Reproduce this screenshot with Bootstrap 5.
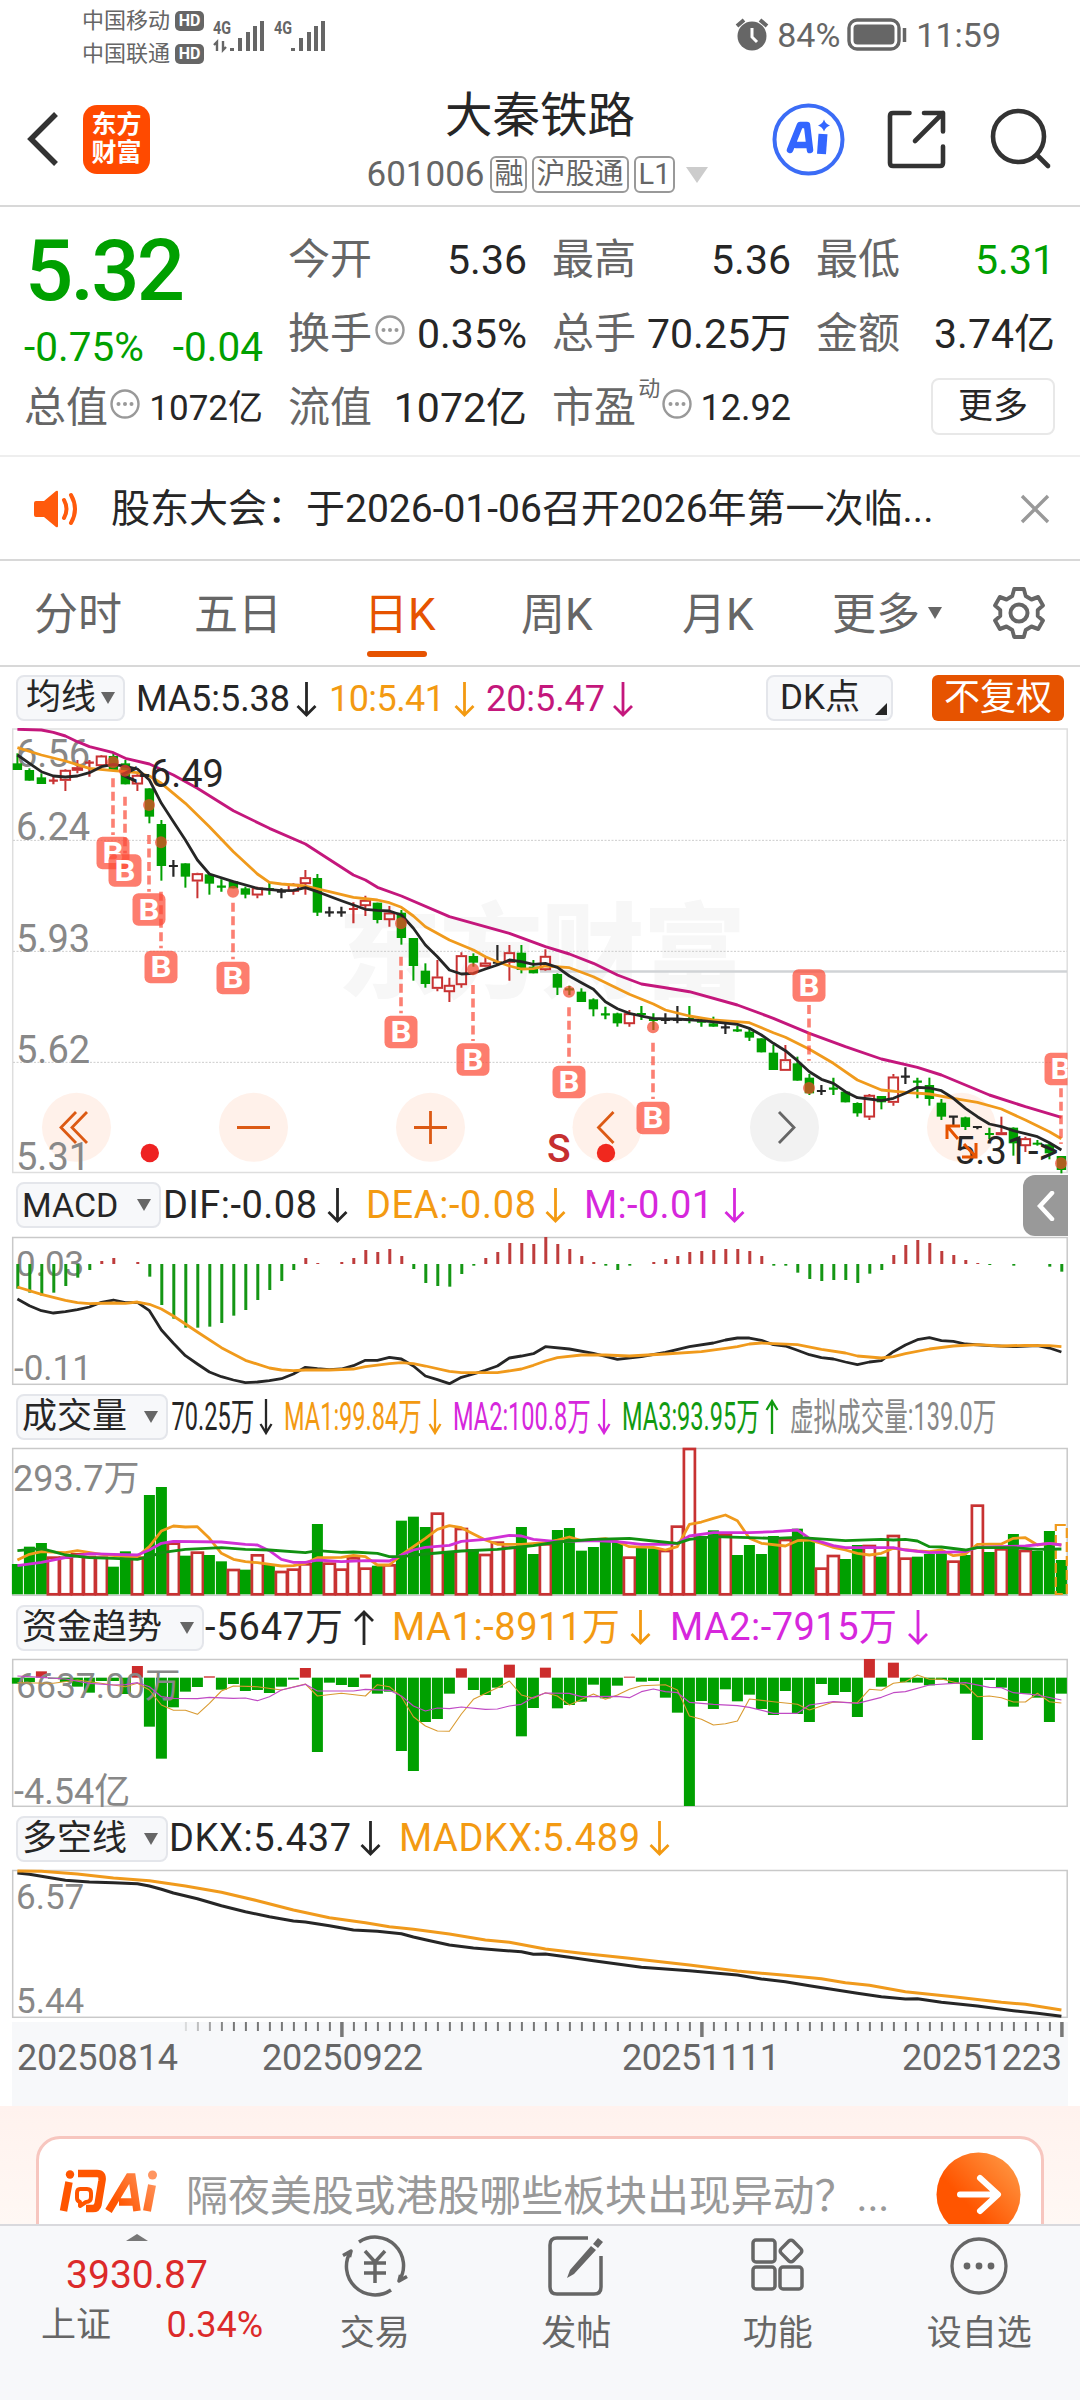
<!DOCTYPE html>
<html lang="zh-CN">
<head>
<meta charset="utf-8">
<meta name="viewport" content="width=1080">
<title>大秦铁路 601006</title>
<link href="https://cdn.jsdelivr.net/npm/bootstrap@5.3.0/dist/css/bootstrap.min.css" rel="stylesheet">
<script src="https://cdn.jsdelivr.net/npm/bootstrap@5.3.0/dist/js/bootstrap.bundle.min.js"></script>
<style>
:root{--ink:#262626;--muted-ink:#666;--down:#00a000;--up:#c83232;--brand:#e65300;--amber:#f39a12;--mag:#c4177c;--pur:#d627dc}
body{width:1080px;height:2400px;overflow:hidden;background:#fff;color:var(--ink);font-family:Roboto,"Noto Sans CJK SC",sans-serif;line-height:1}
svg{display:block;flex:none}
svg text{font-family:Roboto,"Noto Sans CJK SC",sans-serif}
.fs-22{font-size:22px}.fs-35{font-size:35px}.fs-36{font-size:36px}
.statusbar{height:70px;color:var(--muted-ink)}
.carrier{width:122px;margin-left:82px;margin-top:9px}
.hd{background:#666;color:#fff;font-size:16px;font-weight:700;width:29px;height:20px;border-radius:5px;text-align:center;line-height:20px}
.clockside{padding-right:79px;font-size:34px}
.topnav{height:137px;border-bottom:2px solid #d8d8d8;display:grid;grid-template-columns:351px 1fr 351px}
.applogo{width:67px;height:69px;border-radius:14px;background:#ff4a00;color:#fff;font-size:25px;font-weight:700;line-height:28px;text-align:center;padding-top:6px}
.stockname{font-size:47.5px;font-weight:400;line-height:48px}
.codetag{border:2px solid #999;border-radius:6px;height:37px;font-size:29px;line-height:32px;padding:0 3px;text-align:center}
.quote{height:250px;border-bottom:2px solid #eee;padding:16px 25px 0 24px;gap:25px}
.quote-col{width:239px}
.qrow{height:74px;font-size:41px}
.lbl{color:var(--muted-ink)}
.qrow .lbl-name{color:var(--muted-ink);font-size:42px}
.down{color:var(--down)}.up{color:#dc2a2a}
.lastprice{height:96px;font-size:85px;font-weight:500;letter-spacing:-2.8px;padding-left:1px}
.chg{height:52px;font-size:40.5px;padding-top:4px}
.morebtn{width:124px;height:57px;border:2px solid #e8e8e8;border-radius:8px;font-size:35px}
.news{height:104px;border-bottom:2px solid #d8d8d8;font-size:39px;padding-top:2px}
.ktabs{height:106px;border-bottom:2px solid #d8d8d8;font-size:44px;color:var(--muted-ink);padding-left:34px}
.ktabs .nav-item{height:104px;padding-top:4px}
.tab-on{color:var(--brand)}
.tab-on::after{content:"";position:absolute;left:3px;width:60px;height:6px;border-radius:3px;background:var(--brand);bottom:8px}
.legendrow{height:61px}
.pickbtn{height:46px;border:2px solid #e4e6eb;border-radius:8px;background:#f7f8fa;font-size:35px;padding:0 8px 0 4px}
.tri{width:0;height:0;border:7.5px solid transparent;border-top:12px solid #666;border-bottom:0}
.unadj{width:132px;height:46px;border-radius:6px;background:var(--brand);color:#fff;font-size:36px}
.sidetab{right:12px;top:1px;width:45px;height:61px;background:#999;border-radius:12px 0 0 12px}
.askzone{height:118px;background:linear-gradient(#fff2ee,#fff8f4);overflow:hidden;padding:30px 36px 0}
.askcard{height:140px;border:3px solid #f7c6bf;border-radius:24px;background:#fff;padding-top:13px}
.bottombar{height:176px;border-top:2px solid #d9d9dd;background:#f7f8fa;color:var(--muted-ink);font-size:35px}
.tabcell{width:201.5px;padding-top:9px}
</style>
</head>
<body>
<div class="d-flex flex-column">

<div class="statusbar d-flex">
  <div class="carrier fs-22">
    <div class="d-flex align-items-center justify-content-between mb-2" style="height:24px"><span>中国移动</span><span class="hd">HD</span></div>
    <div class="d-flex align-items-center justify-content-between" style="height:26px"><span>中国联通</span><span class="hd">HD</span></div>
  </div>
  <svg width="120" height="60" viewBox="208 0 120 60" fill="#666" style="margin-left:4px">
    <text x="213" y="34" font-size="19" font-weight="700" textLength="18" lengthAdjust="spacingAndGlyphs">4G</text>
    <text x="274" y="34" font-size="19" font-weight="700" textLength="18" lengthAdjust="spacingAndGlyphs">4G</text>
    <path d="M217 51V42l-3 3M223 41v9l3-3" stroke="#666" stroke-width="2.4" fill="none"/>
    <path d="M232 48v3M240 38v13M248 32v19M255 26v25M262 21v30M293 48v3M301 38v13M309 32v19M316 26v25M323 21v30" stroke="#666" stroke-width="4"/>
  </svg>
  <div class="clockside ms-auto d-flex align-items-center">
    <svg width="34" height="34" viewBox="0 0 34 34"><circle cx="17" cy="18" r="14.5" fill="#666"/><path d="M2 8L9 2M32 8L25 2" stroke="#666" stroke-width="4"/><path d="M17 10v9l5 5" stroke="#fff" stroke-width="3" fill="none"/></svg>
    <span class="ms-2">84%</span>
    <svg width="61" height="34" viewBox="0 0 61 34" style="margin-left:7px"><rect x="2" y="2" width="50" height="29" rx="8" fill="none" stroke="#666" stroke-width="3.4"/><rect x="6.500" y="6.500" width="41" height="20" rx="4" fill="#666"/><path d="M57.500 10v14" stroke="#666" stroke-width="3.500"/></svg>
    <span style="margin-left:8px">11:59</span>
  </div>
</div>

<nav class="topnav">
  <div class="d-flex align-items-center" style="padding:3px 0 0 26px">
    <svg width="34" height="56" viewBox="0 0 34 56"><path d="M30 3L5 28l25 25" fill="none" stroke="#333" stroke-width="5.500"/></svg>
    <div class="applogo" style="margin-left:23px">东方<br>财富</div>
  </div>
  <div class="d-flex flex-column align-items-center" style="padding-top:22px">
    <div class="stockname">大秦铁路</div>
    <div class="d-flex align-items-center lbl fs-35" style="margin-top:16px;gap:5px">
      <span style="margin-left:-6px">601006</span><span class="codetag" style="width:37px">融</span><span class="codetag">沪股通</span><span class="codetag" style="width:41px">L1</span>
      <svg width="22" height="16" style="margin-left:6px"><path d="M0 0h22L11 16z" fill="#ccc"/></svg>
    </div>
  </div>
  <div class="d-flex align-items-center justify-content-end" style="padding:3px 28px 0 0">
    <svg width="284" height="80" viewBox="768 99 284 80" fill="none" stroke="#333" stroke-width="4.600" stroke-linecap="round" stroke-linejoin="round">
      <circle cx="808.500" cy="139.500" r="34" stroke="#3b6cf6" stroke-width="4"/>
      <path d="M790 150L800 125h7l3 25M796 145h12" stroke="#3366ff" stroke-width="6.500"/><path d="M823 134L821.500 154" stroke="#3366ff" stroke-width="9" stroke-linecap="butt"/>
      <path d="M824 119.500q1.500 4.500 6 6-4.500 1.500-6 6-1.500-4.500-6-6 4.500-1.500 6-6z" fill="#3366ff" stroke="none"/>
      <path d="M909.500 113H893q-3 0-3 3v47q0 3 3 3h47q3 0 3-3v-16.500M924 113h19v18.500M943 113l-28 28"/>
      <circle cx="1018.500" cy="136.500" r="25.500"/><path d="M1037 155l11 11"/>
    </svg>
  </div>
</nav>

<section class="quote d-flex">
  <div class="quote-col d-flex flex-column down">
    <div class="lastprice d-flex align-items-center"><span>5.32</span></div>
    <div class="chg d-flex align-items-center justify-content-between"><span>-0.75%</span><span>-0.04</span></div>
    <div class="qrow d-flex align-items-center justify-content-between" style="color:var(--ink)"><span class="lbl-name">总值</span><svg width="30" height="30" style="margin:-8px 7px 0 0"><use href="#more-dots"/></svg><span class="fs-35">1072亿</span></div>
  </div>
  <div class="quote-col">
    <div class="qrow d-flex align-items-center justify-content-between"><span class="lbl-name">今开</span><span>5.36</span></div>
    <div class="qrow d-flex align-items-center justify-content-between"><span class="lbl-name">换手</span><svg width="30" height="30" style="margin:-8px 10px 0 0"><use href="#more-dots"/></svg><span>0.35%</span></div>
    <div class="qrow d-flex align-items-center justify-content-between"><span class="lbl-name">流值</span><span>1072亿</span></div>
  </div>
  <div class="quote-col">
    <div class="qrow d-flex align-items-center justify-content-between"><span class="lbl-name">最高</span><span>5.36</span></div>
    <div class="qrow d-flex align-items-center justify-content-between"><span class="lbl-name">总手</span><span>70.25万</span></div>
    <div class="qrow d-flex align-items-center justify-content-between"><span class="lbl-name">市盈</span><span class="lbl fs-22" style="margin-top:-38px">动</span><svg width="30" height="30" style="margin:-8px 6px 0 0"><use href="#more-dots"/></svg><span class="fs-36">12.92</span></div>
  </div>
  <div class="quote-col">
    <div class="qrow d-flex align-items-center justify-content-between"><span class="lbl-name">最低</span><span class="down">5.31</span></div>
    <div class="qrow d-flex align-items-center justify-content-between"><span class="lbl-name">金额</span><span>3.74亿</span></div>
    <div class="qrow d-flex align-items-center justify-content-end"><span class="morebtn d-flex align-items-center justify-content-center" style="margin-top:-3px">更多</span></div>
  </div>
</section>

<section class="news d-flex align-items-center">
  <svg width="46" height="38" viewBox="34 489 46 38" style="margin-left:34px"><path d="M36 500h8l12-10q2-1 2 1v34q0 2-2 1l-12-10h-8q-2 0-2-2v-12q0-2 2-2z" fill="#ff5a0c"/><path d="M64 499q5 9 0 18M71 494q8 14 0 28" fill="none" stroke="#ff5a0c" stroke-width="4" stroke-linecap="round"/></svg>
  <span style="margin-left:31px">股东大会：于2026-01-06召开2026年第一次临...</span>
  <svg class="ms-auto" width="30" height="30" viewBox="0 0 30 30" style="margin-right:30px"><path d="M2 2l26 26M28 2L2 28" stroke="#999" stroke-width="3.400"/></svg>
</section>

<ul class="ktabs nav flex-nowrap">
  <li class="nav-item d-flex align-items-center" style="width:160px">分时</li>
  <li class="nav-item d-flex align-items-center" style="width:170px">五日</li>
  <li class="nav-item d-flex align-items-center position-relative tab-on" style="width:157px">日K</li>
  <li class="nav-item d-flex align-items-center" style="width:161px">周K</li>
  <li class="nav-item d-flex align-items-center" style="width:150px">月K</li>
  <li class="nav-item d-flex align-items-center" style="width:161px">更多<span class="tri" style="margin:-4px 0 0 8px"></span></li>
  <li class="nav-item d-flex align-items-center" style="padding-top:0"><svg width="52" height="54" viewBox="-26 -27 52 54" fill="none" stroke="#666" stroke-width="4" stroke-linejoin="round"><path d="M-5-24H5L7-17 13-13.500 20-16 25-7.500 19.500-3V3L25 7.500 20 16 13 13.500 7 17 5 24H-5L-7 17-13 13.500-20 16-25 7.500-19.500 3V-3L-25-7.500-20-16-13-13.500-7-17Z" transform="scale(.96 1)"/><circle r="8.500"/></svg></li>
</ul>

<div class="legendrow d-flex align-items-center" style="padding-left:16px">
  <span class="pickbtn d-flex align-items-center justify-content-between" style="width:109px;padding-left:8px">均线<span class="tri"></span></span>
  <svg width="641" height="61" viewBox="125 666 641 61" font-size="36">
    <text x="136" y="710" fill="#262626" textLength="154">MA5:5.38</text><use href="#dn" x="306.500" y="681" color="#262626"/>
    <text x="329" y="710" fill="#f39a12" textLength="116">10:5.41</text><use href="#dn" x="464.500" y="681" color="#f39a12"/>
    <text x="486" y="710" fill="#c4177c" textLength="119">20:5.47</text><use href="#dn" x="623" y="681" color="#c4177c"/>
  </svg>
  <span class="pickbtn d-flex align-items-center justify-content-between" style="width:127px;padding-left:12px;padding-right:4px">DK点<svg width="12" height="12" style="margin-top:22px"><path d="M12 0v12H0z" fill="#262626"/></svg></span>
  <span class="unadj d-flex align-items-center justify-content-center" style="margin-left:39px">不复权</span>
</div>

<svg id="k-chart" width="1080" height="446" viewBox="0 728 1080 446"></svg>

<div class="legendrow position-relative d-flex align-items-center" style="padding-left:16px;height:62px">
  <span class="pickbtn d-flex align-items-center justify-content-between" style="width:145px;font-size:34px">MACD<span class="tri"></span></span>
  <svg width="600" height="61" viewBox="161 1175 600 61" font-size="38">
    <text x="163" y="1218" fill="#262626" textLength="154">DIF:-0.08</text><use href="#dn" x="337.500" y="1188" color="#262626"/>
    <text x="366" y="1218" fill="#f39a12" textLength="170">DEA:-0.08</text><use href="#dn" x="555.500" y="1188" color="#f39a12"/>
    <text x="584" y="1218" fill="#d627dc" textLength="129">M:-0.01</text><use href="#dn" x="734.500" y="1188" color="#d627dc"/>
  </svg>
  <div class="sidetab position-absolute d-flex align-items-center justify-content-center"><svg width="18" height="30" viewBox="0 0 18 30"><path d="M15 2L3 15l12 13" fill="none" stroke="#fff" stroke-width="4.500" stroke-linecap="round"/></svg></div>
</div>
<svg id="macd-chart" width="1080" height="150" viewBox="0 1236 1080 150"></svg>

<div class="legendrow d-flex align-items-center" style="padding-left:16px">
  <span class="pickbtn d-flex align-items-center justify-content-between" style="width:152px">成交量<span class="tri"></span></span>
  <svg width="850" height="61" viewBox="168 1386 850 61" font-size="38">
    <text transform="translate(171.500 1430) scale(.62 1)" fill="#262626">70.25万</text><use href="#dn-slim" x="266" y="1399" color="#262626"/>
    <text transform="translate(284 1430) scale(.62 1)" fill="#f39a12">MA1:99.84万</text><use href="#dn-slim" x="435" y="1399" color="#f39a12"/>
    <text transform="translate(453 1430) scale(.62 1)" fill="#d627dc">MA2:100.8万</text><use href="#dn-slim" x="604" y="1399" color="#d627dc"/>
    <text transform="translate(622 1430) scale(.62 1)" fill="#119a11">MA3:93.95万</text><use href="#up-slim" x="772" y="1399" color="#119a11"/>
    <text transform="translate(790 1430) scale(.62 1)" fill="#888">虚拟成交量:139.0万</text>
  </svg>
</div>
<svg id="vol-chart" width="1080" height="150" viewBox="0 1447 1080 150"></svg>

<div class="legendrow d-flex align-items-center" style="padding-left:16px">
  <span class="pickbtn d-flex align-items-center justify-content-between" style="width:188px">资金趋势<span class="tri"></span></span>
  <svg width="800" height="61" viewBox="204 1597 800 61" font-size="38">
    <text x="205" y="1640" fill="#262626" textLength="138">-5647万</text><use href="#upa" x="364" y="1610" color="#262626"/>
    <text x="392" y="1640" fill="#f39a12" textLength="228">MA1:-8911万</text><use href="#dn" x="640.500" y="1610" color="#f39a12"/>
    <text x="670" y="1640" fill="#d627dc" textLength="227">MA2:-7915万</text><use href="#dn" x="918" y="1610" color="#d627dc"/>
  </svg>
</div>
<svg id="fund-chart" width="1080" height="150" viewBox="0 1658 1080 150"></svg>

<div class="legendrow d-flex align-items-center" style="padding-left:16px">
  <span class="pickbtn d-flex align-items-center justify-content-between" style="width:152px">多空线<span class="tri"></span></span>
  <svg width="600" height="61" viewBox="168 1808 600 61" font-size="38">
    <text x="169" y="1851" fill="#262626" textLength="182">DKX:5.437</text><use href="#dn" x="370.500" y="1821" color="#262626"/>
    <text x="399" y="1851" fill="#f39a12" textLength="241">MADKX:5.489</text><use href="#dn" x="659.500" y="1821" color="#f39a12"/>
  </svg>
</div>
<svg id="dkx-chart" width="1080" height="150" viewBox="0 1869 1080 150"></svg>
<svg id="axis" width="1080" height="87" viewBox="0 2019 1080 87"></svg>

<section class="askzone">
  <div class="askcard d-flex align-items-start">
    <svg width="110" height="60" viewBox="56 2162 110 60" style="margin:8px 0 0 17px">
      <defs><linearGradient id="logo-g" gradientUnits="userSpaceOnUse" x1="120" y1="2210" x2="160" y2="2180"><stop stop-color="#ff5500"/><stop offset="1" stop-color="#ff9a66"/></linearGradient></defs>
      <g fill="none" stroke="#ff5500" stroke-width="7.500" stroke-linejoin="round"><path d="M69 2184l-5.500 29"/><path d="M78 2175.500h19q6 0 5 7l-4 24q-1 4-5 4h-7"/><path d="M80 2191h7q4 0 4 4v4q0 5-5 5l-6 4v-4q-3-1-3-4v-5q0-4 3-4z" stroke-width="4"/></g><circle cx="70" cy="2176.500" r="4.200" fill="#ff5500"/>
      <path d="M108.500 2213L129 2179h3l5 34M119 2204h15" fill="none" stroke="url(#logo-g)" stroke-width="7.500"/>
      <path d="M152 2187l-5 26" stroke="url(#logo-g)" stroke-width="8"/><circle cx="152.500" cy="2177" r="4.500" fill="#ff9560"/>
    </svg>
    <span style="font-size:42px;letter-spacing:-.1px;color:#999;margin:24px 0 0 20px">隔夜美股或港股哪些板块出现异动？...</span>
    <svg class="ms-auto" width="85" height="85" viewBox="0 0 85 85" style="margin-right:20px"><defs><linearGradient id="go-g" x1=".35" y1=".6" x2=".9" y2=".1"><stop stop-color="#ff5500"/><stop offset="1" stop-color="#ff9440"/></linearGradient></defs><circle cx="42.500" cy="42.500" r="42" fill="url(#go-g)"/><path d="M24 42.500h37M44 26l18 16.500L44 59" fill="none" stroke="#fff" stroke-width="6" stroke-linecap="round" stroke-linejoin="round"/></svg>
  </div>
</section>

<footer class="bottombar d-flex">
  <div style="width:274px" class="d-flex flex-column align-items-center">
    <svg width="22" height="7" style="margin-top:8px"><path d="M0 7h22L11 0z" fill="#777"/></svg>
    <span class="up" style="font-size:39px;margin-top:15px">3930.87</span>
    <div class="d-flex justify-content-between align-items-center" style="width:222px;margin:12px 0 0 30px"><span>上证</span><span class="up fs-36">0.34%</span></div>
  </div>
  <div class="tabcell d-flex flex-column align-items-center">
    <svg width="68" height="62" viewBox="-34 -31 68 62" fill="none" stroke="#666" stroke-width="3.500" stroke-linejoin="round"><path d="M-16-24A28.500 28.500 0 0 1 24 15L32 10.500M25.500 9L24 15"/><path d="M16 24A28.500 28.500 0 0 1-24-15L-32-10.500M-25.500-9L-24-15"/><path d="M-10-15L0-4 10-15M0-4V17M-11-3H11M-11 7H11"/></svg>
    <span style="margin-top:19px">交易</span>
  </div>
  <div class="tabcell d-flex flex-column align-items-center">
    <svg width="60" height="62" viewBox="-30 -31 60 62" fill="none" stroke="#666" stroke-width="3.500"><path d="M12-28H-19Q-26-28-26-21V21Q-26 28-19 28H18Q25 28 25 21V-10"/><path d="M-9 12L-6 4 15-20l5 4L-2 8zM17-22l5-6 5 4-5 6z" fill="#666" stroke="none"/></svg>
    <span style="margin-top:19px">发帖</span>
  </div>
  <div class="tabcell d-flex flex-column align-items-center">
    <svg width="60" height="62" viewBox="-30 -31 60 62" fill="none" stroke="#666" stroke-width="3.500"><rect x="-25" y="-26" width="22" height="22" rx="3"/><rect x="-25" y="1" width="22" height="22" rx="3"/><rect x="2" y="1" width="22" height="22" rx="3"/><rect x="-8.500" y="-8.500" width="17" height="17" rx="3" transform="translate(13 -15) rotate(45)"/></svg>
    <span style="margin-top:19px">功能</span>
  </div>
  <div class="tabcell d-flex flex-column align-items-center">
    <svg width="60" height="62" viewBox="-30 -31 60 62" fill="none" stroke="#666" stroke-width="3.300"><circle r="27"/><g fill="#666" stroke="none"><circle cx="-12" r="3.400"/><circle r="3.400"/><circle cx="12" r="3.400"/></g></svg>
    <span style="margin-top:19px">设自选</span>
  </div>
</footer>
</div>

<svg width="0" height="0" class="position-absolute">
  <g id="more-dots"><circle cx="15" cy="15" r="13.500" fill="none" stroke="#999" stroke-width="2.400"/><g fill="#999"><circle cx="8.500" cy="15" r="2"/><circle cx="15" cy="15" r="2"/><circle cx="21.500" cy="15" r="2"/></g></g>
  <path id="dn" d="M0 0V33M-9 24L0 33 9 24" fill="none" stroke="currentColor" stroke-width="2.800"/>
  <path id="upa" d="M0 35V2M-9 11L0 2 9 11" fill="none" stroke="currentColor" stroke-width="2.800"/>
  <path id="dn-slim" d="M0 0V34M-5.500 25L0 34 5.500 25" fill="none" stroke="currentColor" stroke-width="2.300"/>
  <path id="up-slim" d="M0 35V2M-5.500 11L0 2 5.500 11" fill="none" stroke="currentColor" stroke-width="2.300"/>
</svg>

<script>
// One trading day is 12px wide; vertical values are in thirds of a pixel below each chart's origin.
const GREEN='#00a000', RED='#c83232', INK='#262626', AMBER='#f09a1c', MAG='#c4177c', PUR='#d030d6';
const X=i=>17.4+i*12;
const frame=(t,b,c)=>`<rect x="12.700" y="${t}" width="1054.500" height="${b-t}" fill="none" stroke="${c}" stroke-width="1.500"/>`;
const line=(s,base,c,w)=>`<polyline fill="none" stroke="${c}" stroke-width="${w}" stroke-linejoin="round" points="${s.trim().split(/\s+/).map(p=>{const[i,v]=p.split(':');return X(+i)+','+(base+v/3).toFixed(1)}).join(' ')}"/>`;
const label=(x,y,t,s,c='#888',e='')=>`<text x="${x}" y="${y}" font-size="${s}" fill="${c}" ${e}>${t}</text>`;

// Daily candles: colour high,body top,body bottom,low
(function(){
const B=720,Y=v=>B+v/3;
const K=`g100,130,150,150 g145,150,182,182 g160,172,192,192 r170,182,184,193 r148,150,182,213 r120,142,152,160 r120,128,130,170 r105,107,138,140 g98,108,150,150 g120,130,193,193 r163,165,193,213 g205,205,290,310 g300,312,438,482 k420,438,440,470 g430,430,470,503 r458,460,484,535 g460,463,491,524 g478,500,502,515 g483,484,505,505 g500,505,524,535 r500,503,526,535 g485,507,509,524 k505,515,517,535 r490,492,515,524 r450,472,492,524 g462,474,578,588 k560,577,579,590 k560,577,579,590 r547,567,569,610 r527,540,558,588 g548,548,600,610 r558,578,600,620 g570,578,654,674 g654,654,738,782 g730,752,792,803 r720,770,806,814 r773,795,816,846 r697,706,795,803 g700,708,728,740 r710,728,740,742 k675,728,730,735 r675,697,728,782 g675,698,750,760 g720,740,760,760 r688,708,750,752 g760,762,803,825 g797,808,810,825 g805,815,846,846 g835,838,868,889 g860,883,885,898 g878,880,910,920 r870,880,912,920 g858,882,884,900 g880,900,902,930 k880,900,902,912 k858,900,902,910 g858,897,899,910 g895,905,908,920 g890,910,920,920 k910,922,924,942 g918,931,934,936 g925,935,953,963 g955,955,997,997 g975,998,1050,1050 r975,1018,1052,1052 g1010,1030,1082,1082 g1062,1073,1120,1125 k1095,1113,1115,1125 g1073,1106,1109,1125 g1115,1115,1147,1147 g1147,1149,1180,1190 r1122,1125,1192,1200 g1128,1128,1147,1168 r1062,1070,1148,1157 k1042,1070,1072,1092 g1073,1085,1088,1135 g1073,1095,1137,1157 g1137,1148,1190,1200 k1190,1190,1193,1220 g1190,1192,1221,1230 k1220,1221,1223,1228 g1223,1242,1245,1257 r1190,1237,1245,1245 g1222,1223,1270,1307 r1250,1255,1278,1296 g1260,1268,1274,1277 g1270,1273,1300,1318 g1308,1308,1350,1360`;
let h='';
h+=label(338,990,'东方财富',103,'#f7f7f7','font-weight="900" textLength="408"');
h+=frame(729,1172.5,'#dedede');
[361,694,1027].forEach(v=>h+=`<path d="M13 ${Y(v)}H1067" stroke="#ccc" stroke-width="1" stroke-dasharray="2 1.500"/>`);
h+=`<path d="M540 971.500H1067" stroke="#d0d3d6" stroke-width="2.500"/>`;
[[76.500,0],[253.500,0],[430.500,0],[607,0],[784.500,1],[961.500,0]].forEach(b=>h+=`<circle cx="${b[0]}" cy="1127.300" r="34.500" fill="${b[1]?'#f2f2f2':'#fff1ea'}"/>`);
h+=`<g fill="none" stroke="#dc5a14" stroke-width="2.800"><path d="M76 1112l-15 15.500 15 15.500M87 1112l-15 15.500 15 15.500M237 1127.500h33M414 1127.500h33M430.500 1111v33M613.500 1112l-15 15.500 15 15.500"/><path d="M779 1112l15 15.500-15 15.500" stroke="#666"/></g>`;
[[767,'6.56'],[840,'6.24'],[951.500,'5.93'],[1062.500,'5.62'],[1169.500,'5.31']].forEach(l=>h+=label(16,l[0],l[1],38));
K.split(' ').forEach((s,i)=>{const c={g:GREEN,r:RED,k:INK}[s[0]],[a,t,b,z]=s.slice(1).split(',').map(v=>Y(+v)),x=X(i);
 if(b-t<1.2){h+=`<path d="M${x} ${a}V${z}M${x-4.500} ${t}h9" stroke="${c}" stroke-width="2.200"/>`;}
 else if(s[0]=='r'){h+=`<path d="M${x} ${a}V${t}M${x} ${b}V${z}" stroke="${c}" stroke-width="2"/><rect x="${x-4.700}" y="${t+.8}" width="9.400" height="${Math.max(b-t-1.6,1)}" fill="none" stroke="${c}" stroke-width="2"/>`;}
 else h+=`<path d="M${x} ${a}V${z}" stroke="${c}" stroke-width="2"/><rect x="${x-4.700}" y="${t}" width="9.400" height="${b-t}" fill="${c}"/>`;});
h+=line('0:28 2:30 3:37 4:48 5:65 6:80 8:98 9:115 11:132 13:165 15:205 18:272 21:325 24:372 28:465 29:480 30:502 32:528 36:590 41:640 44:680 46:702 48:730 50:765 52:792 54:803 56:815 60:855 63:895 66:940 69:980 72:1017 75:1042 77:1065 81:1125 84:1160 87:1192',B,MAG,2.9);
h+=line('0:83 2:105 4:123 6:145 8:152 10:158 11:168 12:190 14:250 16:320 18:395 20:462 21:487 22:492 24:498 26:515 28:532 30:540 31:548 32:562 33:588 34:620 36:660 38:690 39:710 40:725 41:738 42:747 43:746 44:738 46:743 48:770 51:823 53:852 54:870 56:888 58:900 61:908 63:938 64:952 66:988 68:1030 70:1080 72:1110 74:1117 76:1122 78:1135 80:1147 82:1167 84:1200 86:1235 87:1256',B,AMBER,2.8);
h+=line('0:105 1:130 2:155 3:168 4:171 5:168 6:158 7:140 8:133 9:139 10:147 11:180 12:250 13:305 14:360 15:420 16:462 18:485 20:505 22:512 23:511 24:503 25:515 27:542 29:568 30:571 31:573 32:585 33:625 34:675 35:710 36:750 37:762 38:760 39:747 40:735 41:720 42:725 43:733 44:730 45:742 46:768 47:788 48:808 49:845 50:866 51:880 52:888 53:895 54:897 55:897 57:902 60:913 61:925 62:945 63:970 64:992 65:1022 66:1055 67:1078 68:1090 69:1115 70:1133 71:1137 72:1142 73:1135 74:1120 75:1102 76:1104 77:1112 78:1135 79:1165 80:1190 81:1212 82:1220 83:1232 84:1241 85:1250 86:1268 87:1290',B,INK,2.8);
h+=label(120,786.5,'&lt;-6.49',38,INK)+label(954,1164,'5.31-&gt;',38,INK);
h+=`<path d="M947 1139v-13h13M947 1126l11 13M976 1143v14h-14M976 1157l-12-13" fill="none" stroke="#e65300" stroke-width="3"/>`;
// Buy marks: day, dot, dash start, dash end, badge top
[[8,127,175,345,350],[9,152,230,400,403],[11,255,345,515,520],[12,367,515,685,692],[18,515,548,718,725],[32,610,710,880,887],[38,748,795,963,970],[46,815,862,1030,1037],[53,922,968,1137,1145],[66,1104,855,1022,748],[87,1330,1105,1272,998]].forEach(m=>{const x=X(m[0])-.4;
h+=`<circle cx="${x}" cy="${Y(m[1])}" r="6" fill="#f4452b" fill-opacity=".7"/><path d="M${x} ${Y(m[2])}V${Y(m[3])}" stroke="#fb4a38" stroke-opacity=".7" stroke-width="3.600" stroke-dasharray="9 4.500"/><g ${m[0]==87?'clip-path="url(#edge)"':''}><rect x="${x-16.500}" y="${Y(m[4])}" width="33" height="32.500" rx="6" fill="#fc4b36" fill-opacity=".72"/><text x="${x}" y="${Y(m[4])+26.500}" font-size="30" font-weight="700" fill="#fff" text-anchor="middle" textLength="21" lengthAdjust="spacingAndGlyphs">B</text></g>`;});
h+=`<clipPath id="edge"><rect x="0" y="700" width="1067.500" height="500"/></clipPath><circle cx="149.800" cy="1153" r="9.200" fill="#ee2222"/><circle cx="606" cy="1153" r="9.200" fill="#f0281e"/>`+label(547,1161.5,'S',39,'#c62f2f','font-weight="500"');
document.getElementById('k-chart').innerHTML=h;
})();

// MACD histogram and its two lines
(function(){
const B=1170;let h=frame(1237.5,1384.3,'#c9c9c9');
h+=label(16,1276,'0.03',35)+label(14,1379.5,'-0.11',35);
[356,368,377,368,348,323,300,273,264,0,276,320,405,446,473,473,470,459,437,420,390,360,333,300,264,279,0,276,264,240,246,237,258,297,339,348,350,312,287,264,246,219,219,222,201,222,237,258,276,287,300,287,0,276,267,258,246,243,240,237,237,243,258,287,287,308,327,333,330,330,339,311,300,255,225,210,219,243,255,270,279,285,0,287,0,0,290,305].forEach((v,i)=>{if(v)h+=`<path d="M${X(i)+.4} ${B+94}V${B+v/3}" stroke="${v<282?'#be3c3c':'#149614'}" stroke-width="3"/>`});
h+=line('0:387 1:407 2:422 3:429 4:425 5:419 6:411 7:397 8:390 9:398 10:397 11:422 12:480 13:520 14:557 15:582 16:606 17:620 18:630 19:638 20:636 21:632 22:626 23:612 24:592 25:596 26:599 27:597 28:587 29:571 30:571 31:562 32:567 33:588 34:618 35:629 36:641 37:622 38:612 39:601 40:588 41:564 42:558 43:551 44:530 46:537 48:550 50:568 52:560 54:547 56:530 58:519 59:510 60:504 61:504 62:511 63:524 64:528 65:541 66:554 67:563 68:567 69:576 70:584 71:576 72:572 73:545 74:525 75:509 76:503 77:512 78:514 79:522 81:527 83:530 85:527 86:534 87:546',B,INK,2.8);
h+=line('0:351 2:373 4:391 5:398 6:401 8:399 9:400 10:396 11:403 12:417 13:438 14:462 15:486 17:533 19:571 21:594 22:600 23:602 24:600 26:600 28:597 29:590 31:581 32:578 33:581 34:588 36:604 37:608 40:608 42:597 43:586 44:573 45:563 47:555 49:555 51:558 54:552 57:545 59:535 60:530 61:522 62:519 63:521 65:524 67:538 69:549 70:558 72:564 73:560 74:551 76:537 78:528 80:524 82:528 84:526 86:527 87:530',B,AMBER,2.8);
document.getElementById('macd-chart').innerHTML=h;
})();

// Volume
(function(){
const B=1170;let h=frame(1448.5,1595.3,'#c9c9c9');
'g1182 g1130 g1119 r1160 r1160 r1150 r1158 r1160 g1190 g1144 r1160 g975 g951 r1118 g1157 r1145 g1155 g1174 r1197 g1199 r1153 g1185 r1203 r1196 r1180 g1062 r1178 r1196 r1162 r1193 g1187 r1183 g1052 g1040 g1071 r1028 g1143 r1074 g1138 r1152 r1115 r1130 g1071 g1152 r1120 g1080 g1074 g1142 g1131 g1115 g1113 r1160 g1133 g1135 r1140 r1067 r834 g1098 g1081 r1093 g1155 g1125 g1152 g1098 r1107 g1076 g1113 r1193 r1155 g1167 g1125 r1125 g1160 r1095 r1163 g1160 g1152 g1150 r1172 g1155 r1004 g1146 r1135 g1092 r1140 g1143 g1083 g1170'.split(' ').forEach((s,i)=>{const y=B+s.slice(1)/3,x=X(i)-5.5,b=1594.3;
h+=s[0]=='g'?`<rect x="${x}" y="${y}" width="11" height="${b-y}" fill="${GREEN}"/>`:`<rect x="${x}" y="${y+1}" width="11" height="${b-y-1}" fill="#fff" stroke="${RED}" stroke-width="2.700"/>`});
h+=`<rect x="1055.800" y="1525" width="11" height="69" fill="none" stroke="${AMBER}" stroke-width="2.200" stroke-dasharray="10 4"/>`;
h+=label(13,1490.5,'293.7万',36);
h+=line('0:1170 1:1153 2:1145 4:1148 5:1142 7:1153 9:1160 10:1160 11:1130 12:1083 13:1068 14:1071 15:1070 16:1105 17:1150 18:1168 19:1175 20:1178 22:1188 23:1187 24:1180 25:1163 27:1162 28:1156 29:1160 30:1185 31:1185 32:1155 33:1130 34:1105 35:1078 36:1067 37:1073 38:1092 39:1110 40:1123 42:1123 44:1118 45:1110 46:1101 47:1112 49:1106 50:1115 51:1130 53:1132 54:1140 55:1130 56:1063 57:1056 58:1045 59:1035 60:1052 61:1105 62:1120 64:1128 65:1112 66:1110 67:1120 68:1132 69:1140 70:1150 71:1155 72:1150 73:1135 75:1143 76:1145 77:1140 78:1157 79:1152 80:1123 82:1122 83:1105 84:1103 85:1125 86:1120 87:1125',B,AMBER,2.8);
h+=line('0:1187 2:1177 4:1163 6:1151 8:1153 10:1155 11:1140 12:1120 13:1114 17:1116 19:1123 20:1125 21:1142 22:1168 23:1177 24:1177 25:1170 27:1175 29:1172 31:1173 32:1155 33:1140 34:1132 36:1126 37:1114 39:1108 41:1096 42:1098 43:1108 45:1115 48:1112 50:1115 52:1123 54:1123 55:1120 56:1098 58:1088 61:1088 63:1085 65:1080 66:1105 68:1127 69:1133 73:1133 74:1140 76:1148 79:1145 80:1132 82:1130 84:1128 86:1120 87:1125',B,PUR,2.8);
h+=line('0:1142 2:1136 3:1145 4:1155 6:1163 8:1165 10:1168 11:1160 12:1148 14:1138 17:1133 19:1138 21:1140 24:1148 25:1142 27:1147 28:1146 30:1150 31:1160 32:1160 34:1152 37:1143 40:1138 43:1127 45:1116 48:1108 51:1105 53:1113 55:1120 56:1108 58:1100 61:1103 63:1105 65:1102 69:1112 72:1108 73:1110 74:1108 75:1113 76:1130 77:1131 79:1140 80:1133 83:1133 85:1138 87:1137',B,'#119111',2.8);
document.getElementById('vol-chart').innerHTML=h;
})();

// Capital flow
(function(){
const B=1590;let h=frame(1659.5,1806.3,'#c9c9c9');
[281,276,244,266,276,290,308,273,273,312,228,410,506,352,305,291,259,299,282,303,300,309,290,269,234,486,278,285,291,253,311,305,483,543,396,387,311,235,300,315,293,224,439,354,233,355,345,335,284,325,287,260,275,273,323,368,648,333,357,298,334,314,357,375,303,372,396,282,315,306,381,207,290,218,277,278,286,270,280,311,450,270,293,350,311,323,396,311].forEach((v,i)=>{const a=B+263/3,y=B+v/3;h+=`<rect x="${X(i)-5.5}" y="${Math.min(a,y)}" width="11" height="${Math.abs(a-y)}" fill="${v<263?'#cc2c2c':GREEN}"/>`});
h+=label(16,1698,'6637.00万',35.5)+label(14,1803.5,'-4.54亿',36);
h+=line('0:278 3:280 5:270 8:285 9:290 10:280 11:300 12:345 13:361 14:361 15:373 16:340 17:303 18:288 20:290 22:300 24:282 25:318 27:310 29:318 30:284 31:290 32:320 33:380 34:408 35:423 36:424 37:372 38:328 40:293 41:273 42:315 43:325 44:308 45:318 46:345 48:312 49:328 50:315 51:298 52:287 54:284 55:300 56:378 57:388 58:405 59:401 60:393 61:327 63:335 65:343 66:360 68:336 70:338 71:298 72:301 73:280 74:275 75:255 76:268 77:267 79:285 80:320 81:318 82:323 83:336 84:336 85:310 86:335 87:339',B,'#d99a30',1.1);
h+=line('0:258 2:262 4:267 6:280 8:285 9:284 10:278 11:290 12:320 13:325 15:326 16:322 18:325 19:324 20:332 21:320 22:300 24:283 25:303 28:303 29:298 31:301 32:318 33:348 34:363 35:354 36:356 37:351 39:358 40:357 41:348 42:343 43:322 44:309 46:310 47:320 50:319 51:323 52:305 53:297 54:305 55:308 56:337 58:343 60:347 61:352 63:370 65:370 66:345 68:335 70:340 72:322 73:308 74:305 76:285 79:278 81:292 82:293 83:308 85:315 87:330',B,'#c04ac4',1.2);
document.getElementById('fund-chart').innerHTML=h;
})();

// Long-short line and date axis
(function(){
const B=1590;let h=frame(1870.5,2017.3,'#c9c9c9');
h+=label(16,1908.5,'6.57',35)+label(16,2012.5,'5.44',35);
h+=line('0:849 1:853 2:859 4:871 6:876 8:878 10:881 11:888 12:898 13:909 15:926 17:947 19:965 21:980 23:993 24:996 26:1007 28:1020 30:1024 32:1031 33:1041 34:1049 36:1065 38:1074 40:1080 42:1085 43:1093 44:1092 46:1102 48:1112 52:1132 56:1142 60:1155 62:1167 64:1175 66:1187 70:1210 72:1220 74:1227 75:1226 77:1237 80:1248 83:1262 85:1270 87:1279',B,INK,3);
h+=line('0:843 2:844 5:852 8:864 11:872 14:888 17:907 20:932 23:960 26:983 29:998 31:1010 33:1018 36:1032 39:1050 41:1057 44:1077 47:1090 51:1105 56:1125 60:1143 64:1156 67:1166 69:1178 71:1186 74:1205 78:1220 82:1237 84:1243 87:1260',B,AMBER,3);
document.getElementById('dkx-chart').innerHTML=h;
h='<rect x="12" y="2022" width="1056" height="84" fill="#f7f8fa"/>';
for(let i=14;i<88;i++){const m=[27,57,87].includes(i);h+=`<path d="M${X(i)+.5} 2022v${m?15:9}" stroke="#777" stroke-width="${m?3.5:2}" opacity="${Math.min(1,(i-13)*.22)}"/>`}
h+=label(17,2070,'20250814',36,'#666','textLength="161"')+label(262,2070,'20250922',36,'#666','textLength="161"')+label(622,2070,'20251111',36,'#666','textLength="158"')+label(902,2070,'20251223',36,'#666','textLength="160"');
document.getElementById('axis').innerHTML=h;
})();
</script>
</body>
</html>
